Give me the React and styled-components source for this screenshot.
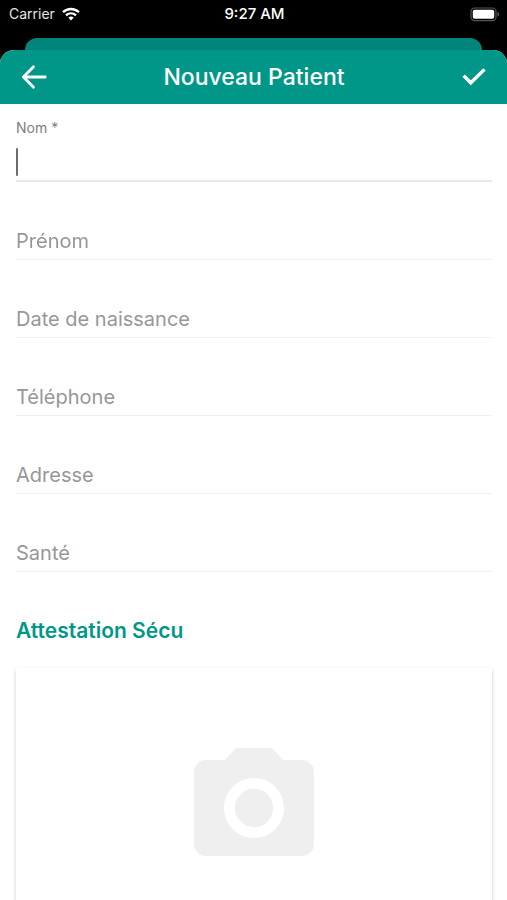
import React, { useState } from "react";
import styled, { createGlobalStyle } from "styled-components";

const GlobalStyle = createGlobalStyle`
  * {
    box-sizing: border-box;
  }

  body {
    margin: 0;
    background: #000;
    font-family: Inter, "Liberation Sans", sans-serif;
  }

  #root {
    height: 100vh;
    overflow: hidden;
  }
`;

const Screen = styled.div`
  height: 100%;
  display: flex;
  flex-direction: column;
`;

const StatusBar = styled.div`
  height: 38px;
  padding: 0 7px 10px 9px;
  display: grid;
  grid-template-columns: 1fr auto 1fr;
  align-items: center;
  color: #fff;
  font-size: 14px;
  line-height: 20px;
`;

const Carrier = styled.div`
  display: flex;
  align-items: center;
  gap: 7px;
  color: #e4e4e4;
`;

const Time = styled.div`
  font-size: 15px;
  font-weight: 500;
`;

const Battery = styled.svg`
  justify-self: end;
`;

const PreviousSheet = styled.div`
  height: 12px;
  margin: 0 25px;
  border-radius: 12px 12px 0 0;
  background: #00857a;
`;

const Sheet = styled.main`
  flex: 1;
  min-height: 0;
  display: flex;
  flex-direction: column;
  border-radius: 14px 14px 0 0;
  overflow: hidden;
  background: #fff;
`;

const Header = styled.header`
  flex: none;
  height: 54px;
  padding: 0 15px 0 16px;
  display: flex;
  align-items: center;
  justify-content: space-between;
  background: #009788;
  color: #fff;
`;

const Title = styled.h1`
  margin: 0;
  font-size: 23px;
  line-height: 32px;
  font-weight: 500;
`;

const IconButton = styled.button`
  width: 36px;
  height: 36px;
  padding: 0;
  display: flex;
  align-items: center;
  justify-content: center;
  border: 0;
  background: none;
  color: inherit;
`;

const Form = styled.form`
  flex: 1;
  min-height: 0;
  overflow: hidden;
  padding: 0 15px 0 16px;
`;

const FieldRow = styled.div`
  height: 78px;
  display: grid;
  border-bottom: ${(p) => (p.$active ? "2px solid #e8e8e8" : "1px solid #efefef")};
`;

const Label = styled.label`
  grid-area: 1 / 1;
  align-self: ${(p) => (p.$floating ? "start" : "end")};
  padding: ${(p) => (p.$floating ? "14px 0 0" : "0 0 4px")};
  color: ${(p) => (p.$floating ? "#808080" : "#979797")};
  font-size: ${(p) => (p.$floating ? 14 : 20)}px;
  line-height: ${(p) => (p.$floating ? 20 : 28)}px;
`;

const Input = styled.input`
  grid-area: 1 / 1;
  align-self: end;
  width: 100%;
  height: 40px;
  padding: 0;
  border: 0;
  outline: 0;
  background: transparent;
  color: #333;
  caret-color: ${(p) => (p.$empty ? "transparent" : "#6d6d6d")};
  font: inherit;
  font-size: 20px;
`;

const Caret = styled.span`
  grid-area: 1 / 1;
  align-self: end;
  width: 2px;
  height: 28px;
  margin-bottom: 4px;
  border-radius: 1px;
  background: #6d6d6d;
  pointer-events: none;
`;

const SectionTitle = styled.h2`
  margin: 45px 0 23px;
  color: #009788;
  font-size: 21px;
  line-height: 28px;
  font-weight: 600;
`;

const PhotoButton = styled.button`
  width: 100%;
  height: 280px;
  padding: 0;
  display: flex;
  align-items: center;
  justify-content: center;
  border: 0;
  border-radius: 2px;
  background: #fff;
  color: #efefef;
  box-shadow: 0 2px 4px rgba(0, 0, 0, 0.2);
`;

const WifiIcon = () => (
  <svg width="18" height="14" viewBox="0 0 18 14" fill="none" stroke="#fff" strokeWidth="2.4">
    <path d="M1 5.2C5.6.9 12.4.9 17 5.2" />
    <path d="M4 8.3c2.9-2.6 7.1-2.6 10 0" />
    <path d="M6.3 10.6L9 13.5l2.7-2.9c-1.6-1.4-3.8-1.4-5.4 0z" fill="#fff" stroke="none" />
  </svg>
);

const BatteryIcon = () => (
  <Battery width="30" height="15" viewBox="0 0 30 15">
    <rect x="1" y="1" width="25" height="12.6" rx="3.6" fill="none" stroke="#555" strokeWidth="1.2" />
    <rect x="2.8" y="2.8" width="21.4" height="9" rx="1.8" fill="#fff" />
    <path d="M27.4 5v4.6c1.1-.4 1.9-1.2 1.9-2.3s-.8-1.9-1.9-2.3z" fill="#555" />
  </Battery>
);

const BackIcon = () => (
  <svg
    width="28"
    height="28"
    viewBox="0 0 28 28"
    fill="none"
    stroke="currentColor"
    strokeWidth="2.8"
    strokeLinecap="round"
    strokeLinejoin="round"
  >
    <path d="M13.5 3.8L3.4 14l10.1 10.2M3.8 14h21.4" />
  </svg>
);

const CheckIcon = () => (
  <svg width="28" height="28" viewBox="0 0 28 28" fill="none" stroke="currentColor" strokeWidth="3.4">
    <path d="M3.6 12.6l7.2 7.2L24.5 6.4" />
  </svg>
);

const CameraIcon = () => (
  <svg width="144" height="144" viewBox="0 0 24 24" fill="currentColor">
    <circle cx="12" cy="12" r="3.2" />
    <path d="M9 2L7.17 4H4c-1.1 0-2 .9-2 2v12c0 1.1.9 2 2 2h16c1.1 0 2-.9 2-2V6c0-1.1-.9-2-2-2h-3.17L15 2H9zm3 15c-2.76 0-5-2.24-5-5s2.24-5 5-5 5 2.24 5 5-2.24 5-5 5z" />
  </svg>
);

const Field = ({ id, label, type = "text", autoFocus }) => {
  const [value, setValue] = useState("");
  const [active, setActive] = useState(Boolean(autoFocus));

  return (
    <FieldRow $active={active}>
      <Label htmlFor={id} $floating={active || value !== ""}>
        {label}
      </Label>
      <Input
        id={id}
        type={type}
        value={value}
        autoFocus={autoFocus}
        $empty={value === ""}
        onChange={(e) => setValue(e.target.value)}
        onFocus={() => setActive(true)}
        onBlur={() => setActive(false)}
      />
      {active && value === "" && <Caret />}
    </FieldRow>
  );
};

const App = () => (
  <>
    <GlobalStyle />
    <Screen>
      <StatusBar>
        <Carrier>
          Carrier
          <WifiIcon />
        </Carrier>
        <Time>9:27 AM</Time>
        <BatteryIcon />
      </StatusBar>
      <PreviousSheet />
      <Sheet>
        <Header>
          <IconButton type="button" aria-label="Retour">
            <BackIcon />
          </IconButton>
          <Title>Nouveau Patient</Title>
          <IconButton type="submit" form="patient" aria-label="Enregistrer">
            <CheckIcon />
          </IconButton>
        </Header>
        <Form id="patient" onSubmit={(e) => e.preventDefault()}>
          <Field id="nom" label="Nom *" autoFocus />
          <Field id="prenom" label="Prénom" />
          <Field id="naissance" label="Date de naissance" />
          <Field id="telephone" label="Téléphone" type="tel" />
          <Field id="adresse" label="Adresse" />
          <Field id="sante" label="Santé" />
          <SectionTitle>Attestation Sécu</SectionTitle>
          <PhotoButton type="button" aria-label="Ajouter une photo">
            <CameraIcon />
          </PhotoButton>
        </Form>
      </Sheet>
    </Screen>
  </>
);

export default App;
